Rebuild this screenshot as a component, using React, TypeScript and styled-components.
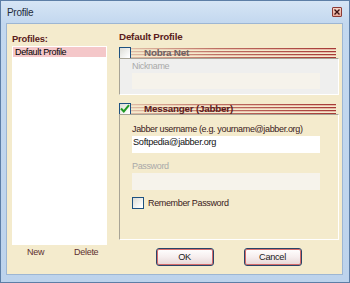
import React, { useState } from "react";
import styled, { createGlobalStyle } from "styled-components";

const GlobalStyle = createGlobalStyle`
  * { box-sizing: border-box; }
  html, body { margin: 0; padding: 0; background: #c0d6ee; }
  body { font-family: "Liberation Sans", Arial, sans-serif; }
`;

const Window = styled.div`
  width: 350px;
  height: 283px;
  border: 1px solid #5d7ea6;
  background: linear-gradient(to bottom, #d6e5f5 0px, #c3d8ef 22px, #bdd3ec 100%);
  display: flex;
  flex-direction: column;
  padding: 0 6px 7px 5px;
`;

const TitleBar = styled.div`
  height: 22px;
  display: flex;
  align-items: center;
  justify-content: space-between;
  padding-left: 1px;
  padding-right: 1px;
`;

const Title = styled.span`
  font-size: 10px;
  letter-spacing: -0.3px;
  color: #1e2b3a;
`;

const CloseButton = styled.div`
  width: 10px;
  height: 10px;
  border: 1px solid #8c3a34;
  border-radius: 1px;
  background: linear-gradient(to bottom, #f6d2c6, #e8a898);
  display: flex;
  align-items: center;
  justify-content: center;
`;

const Client = styled.div`
  flex: 1;
  display: flex;
  background: #f4ebcd;
  border: 1px solid #9db6d3;
`;

const LeftPanel = styled.div`
  width: 112px;
  display: flex;
  flex-direction: column;
  padding-left: 5px;
`;

const PanelLabel = styled.div`
  font-size: 9.4px;
  letter-spacing: -0.2px;
  font-weight: bold;
  color: #5a1c1c;
  line-height: 11px;
  height: 11px;
  margin-top: 9px;
  margin-bottom: 2px;
`;

const ListBox = styled.div`
  width: 95px;
  height: 199px;
  background: #ffffff;
  padding: 1px;
`;

const ListItem = styled.div<{ selected?: boolean }>`
  height: 10px;
  line-height: 10px;
  font-size: 9px;
  letter-spacing: -0.35px;
  color: #000;
  padding-left: 2px;
  background: ${(p) => (p.selected ? "#f4c7c9" : "transparent")};
`;

const ListActions = styled.div`
  display: flex;
  margin-top: 2px;
  height: 11px;
  line-height: 11px;
`;

const LinkButton = styled.span<{ offset: number }>`
  font-size: 9px;
  letter-spacing: -0.3px;
  color: #5e3030;
  margin-left: ${(p) => p.offset}px;
`;

const RightPanel = styled.div`
  flex: 1;
  display: flex;
  flex-direction: column;
  padding-right: 3px;
`;

const ProfileTitle = styled.div`
  font-size: 9.8px;
  letter-spacing: -0.2px;
  font-weight: bold;
  color: #5a1c1c;
  height: 12px;
  line-height: 12px;
  margin-top: 7px;
  margin-bottom: 4px;
`;

const SectionHeader = styled.div`
  height: 11px;
  display: flex;
  align-items: center;
  margin-right: 3px;
  background:
    linear-gradient(to right, rgba(244, 235, 205, 0.8) 0%, rgba(244, 235, 205, 0.3) 45%, rgba(244, 235, 205, 0) 100%),
    repeating-linear-gradient(
      to bottom,
      #f4ebcd 0px,
      #f4ebcd 1px,
      #a63a36 1px,
      #a63a36 2px,
      #e6b8a6 2px,
      #e6b8a6 3px
    );
`;

const SectionTitle = styled.span<{ enabled?: boolean }>`
  font-size: 9.8px;
  letter-spacing: -0.2px;
  font-weight: bold;
  line-height: 11px;
  margin-left: 13px;
  color: ${(p) => (p.enabled ? "#5a1c1c" : "#6c6262")};
`;

const Check = styled.div`
  width: 12px;
  height: 12px;
  border: 1px solid #1d5180;
  background: linear-gradient(135deg, #dcdcd5 0%, #ffffff 90%);
  display: flex;
  align-items: center;
  justify-content: center;
  flex-shrink: 0;
`;

const GroupBox = styled.div<{ disabled?: boolean; h: number }>`
  height: ${(p) => p.h}px;
  border: 1px solid;
  border-color: #a8a496 #ffffff #ffffff #a8a496;
  background: ${(p) => (p.disabled ? "#efefee" : "#f4ebcd")};
  padding: 0 18px 0 12px;
  display: flex;
  flex-direction: column;
`;

const FieldLabel = styled.div<{ disabled?: boolean; top: number }>`
  font-size: 9px;
  letter-spacing: -0.35px;
  height: 11px;
  line-height: 11px;
  margin-top: ${(p) => p.top}px;
  color: ${(p) => (p.disabled ? "#a9a9a9" : "#3a2020")};
`;

const TextInput = styled.div<{ disabled?: boolean; h: number }>`
  height: ${(p) => p.h}px;
  margin-top: 1px;
  background: ${(p) => (p.disabled ? "#f6f3eb" : "#ffffff")};
  font-size: 9.2px;
  letter-spacing: -0.3px;
  color: #111;
  line-height: 12px;
  padding-left: 1px;
`;

const CheckRow = styled.div`
  display: flex;
  align-items: center;
  gap: 4px;
  margin-top: 7px;
  font-size: 9px;
  letter-spacing: -0.35px;
  color: #3a2020;
`;

const ButtonRow = styled.div`
  display: flex;
  justify-content: center;
  gap: 30px;
  margin-top: 8px;
  margin-right: 1px;
`;

const DialogButton = styled.button`
  width: 58px;
  height: 18px;
  padding: 0;
  border: 1px solid #2a4468;
  border-radius: 3px;
  box-shadow: inset 0 0 0 1px #d46a6a;
  background: linear-gradient(to bottom, #ffffff 0%, #f6eeee 50%, #e6d6d6 100%);
  font-family: "Liberation Sans", Arial, sans-serif;
  font-size: 9.2px;
  letter-spacing: -0.3px;
  color: #1a1a1a;
`;

const CloseGlyph = () => (
  <svg width="6" height="6" viewBox="0 0 6 6">
    <path d="M0.5 0.5 L5.5 5.5 M5.5 0.5 L0.5 5.5" stroke="#3a1010" strokeWidth="1.4" />
  </svg>
);

const CheckMark = () => (
  <svg width="10" height="9" viewBox="0 0 10 9">
    <path d="M1 4.5 L3.8 7.4 L9 1.2" stroke="#1f9a22" strokeWidth="2" fill="none" />
  </svg>
);

const App = () => {
  const [jabberOn] = useState(true);

  return (
    <>
      <GlobalStyle />
      <Window>
        <TitleBar>
          <Title>Profile</Title>
          <CloseButton>
            <CloseGlyph />
          </CloseButton>
        </TitleBar>
        <Client>
          <LeftPanel>
            <PanelLabel>Profiles:</PanelLabel>
            <ListBox>
              <ListItem selected>Default Profile</ListItem>
            </ListBox>
            <ListActions>
              <LinkButton offset={15}>New</LinkButton>
              <LinkButton offset={30}>Delete</LinkButton>
            </ListActions>
          </LeftPanel>

          <RightPanel>
            <ProfileTitle>Default Profile</ProfileTitle>

            <SectionHeader>
              <Check />
              <SectionTitle>Nobra Net</SectionTitle>
            </SectionHeader>
            <GroupBox disabled h={37}>
              <FieldLabel disabled top={2}>Nickname</FieldLabel>
              <TextInput disabled h={16} />
            </GroupBox>

            <div style={{ height: 8 }} />

            <SectionHeader>
              <Check>{jabberOn && <CheckMark />}</Check>
              <SectionTitle enabled>Messanger (Jabber)</SectionTitle>
            </SectionHeader>
            <GroupBox h={126}>
              <FieldLabel top={9}>Jabber username (e.g. yourname@jabber.org)</FieldLabel>
              <TextInput h={17}>Softpedia@jabber.org</TextInput>
              <FieldLabel disabled top={8}>Password</FieldLabel>
              <TextInput disabled h={17} />
              <CheckRow>
                <Check />
                <span>Remember Password</span>
              </CheckRow>
            </GroupBox>

            <ButtonRow>
              <DialogButton>OK</DialogButton>
              <DialogButton>Cancel</DialogButton>
            </ButtonRow>
          </RightPanel>
        </Client>
      </Window>
    </>
  );
};

export default App;
